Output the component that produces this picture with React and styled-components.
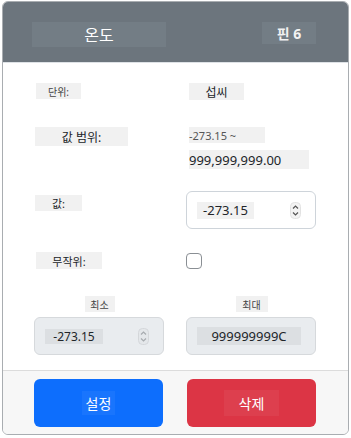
import React from "react";
import styled, { createGlobalStyle } from "styled-components";

const Global = createGlobalStyle`
  html, body { margin: 0; padding: 0; background: #fff; }
  body { width: 351px; height: 438px; overflow: hidden;
    font-family: "Noto Sans", "Noto Sans CJK KR", sans-serif; color: #212529; }
`;

const Modal = styled.div`
  box-sizing: border-box;
  margin: 1px 0 0 2px;
  width: 347px;
  height: 434px;
  border: 1px solid #a9adb1;
  border-radius: 6px;
  overflow: hidden;
  display: flex;
  flex-direction: column;
  background: #fff;
`;

const Header = styled.div`
  height: 60px;
  flex: none;
  background: #6c757d;
  border-bottom: 1px solid #dee2e6;
  display: flex;
  align-items: center;
  justify-content: space-between;
  padding: 0 32px 0 29px;
`;

const TitleBox = styled.div`
  width: 134px;
  height: 25px;
  margin-top: 4px;
  background: #737d85;
  color: #fff;
  font-size: 16px;
  display: flex;
  align-items: center;
  justify-content: center;
`;

const PinBox = styled.div`
  width: 54px;
  height: 22px;
  margin-top: 2px;
  background: #737d85;
  color: #f1f1f1;
  font-size: 14px;
  font-weight: 700;
  display: flex;
  align-items: center;
  justify-content: center;
`;

const Body = styled.div`
  flex: 1;
  padding: 20px 32px 0 31px;
  display: flex;
  flex-direction: column;
`;

const Row = styled.div`
  display: grid;
  grid-template-columns: 1fr 1fr;
  column-gap: 22px;
  align-items: start;
  margin-top: ${(p) => p.$mt || 0}px;
`;

const Label = styled.div`
  width: ${(p) => p.$w}px;
  height: ${(p) => p.$h || 17}px;
  margin-top: ${(p) => p.$top || 0}px;
  margin-left: ${(p) => p.$left || 1}px;
  background: #f1f1f1;
  font-size: ${(p) => p.$fs || 12}px;
  color: ${(p) => p.$c || "#212529"};
  display: flex;
  align-items: center;
  justify-content: ${(p) => (p.$start ? "flex-start" : "center")};
  white-space: nowrap;
`;

const Stack = styled.div`
  display: flex;
  flex-direction: column;
  gap: 7px;
`;

const CenterCell = styled.div`
  display: flex;
  justify-content: center;
`;

const InputBox = styled.div`
  box-sizing: border-box;
  height: 38px;
  border: 1px solid ${(p) => (p.$disabled ? "#d6d9dc" : "#ced4da")};
  border-radius: 6px;
  background: ${(p) => (p.$disabled ? "#e9ecef" : "#fff")};
  display: flex;
  align-items: center;
  justify-content: space-between;
  padding: 0 14px 0 10px;
`;

const InnerText = styled.div`
  width: ${(p) => p.$w}px;
  height: ${(p) => p.$h || 17}px;
  background: ${(p) => (p.$disabled ? "#dcdfe2" : "#f1f1f1")};
  font-size: ${(p) => p.$fs || 13}px;
  color: #212529;
  display: flex;
  align-items: center;
  justify-content: center;
  white-space: nowrap;
`;

const Checkbox = styled.div`
  box-sizing: border-box;
  width: 16px;
  height: 16px;
  margin-top: 1px;
  border: 1px solid #8a8f94;
  border-radius: 4px;
  background: #fff;
`;

const Footer = styled.div`
  height: 64px;
  flex: none;
  background: #f7f7f7;
  border-top: 1px solid #dcdcdc;
  display: grid;
  grid-template-columns: 1fr 1fr;
  column-gap: 24px;
  padding: 8px 32px 0 31px;
  box-sizing: border-box;
`;

const Button = styled.div`
  height: 48px;
  border-radius: 6px;
  background: ${(p) => p.$bg};
  display: flex;
  align-items: center;
  justify-content: center;
`;

const ButtonText = styled.span`
  color: #fff;
  font-size: 14px;
  padding: ${(p) => p.$pad};
  background: rgba(255, 255, 255, 0.05);
`;

const Spinner = ({ faded }) => (
  <svg width="11" height="17" viewBox="0 0 11 17">
    <rect x="0.5" y="0.5" width="10" height="16" rx="4" fill={faded ? "#e4e7ea" : "#f3f3f3"} stroke={faded ? "#d4d7da" : "#e2e2e2"} />
    <path d="M3 6.5 L5.5 4 L8 6.5" fill="none" stroke={faded ? "#a7abaf" : "#555"} strokeWidth="1.2" />
    <path d="M3 10.5 L5.5 13 L8 10.5" fill="none" stroke={faded ? "#a7abaf" : "#555"} strokeWidth="1.2" />
  </svg>
);

export default function App() {
  return (
    <>
      <Global />
      <Modal>
        <Header>
          <TitleBox>온도</TitleBox>
          <PinBox>핀 6</PinBox>
        </Header>
        <Body>
          <Row>
            <Label $w={45} $h={16} $fs={10} $c="#444" $left={2}>단위:</Label>
            <Label $w={55} $h={17} $fs={12} $left={3}>섭씨</Label>
          </Row>
          <Row $mt={27}>
            <Label $w={93} $h={19} $fs={12}>값 범위:</Label>
            <Stack>
              <Label $w={76} $h={16} $fs={11} $c="#555" $start $left={3}>-273.15 ~</Label>
              <Label $w={120} $h={19} $fs={13} $start $left={3}>999,999,999.00</Label>
            </Stack>
          </Row>
          <Row $mt={22}>
            <Label $w={47} $h={16} $fs={11} $top={4}>값:</Label>
            <InputBox>
              <InnerText $w={57}>-273.15</InnerText>
              <Spinner />
            </InputBox>
          </Row>
          <Row $mt={23}>
            <Label $w={66} $h={17} $fs={11} $left={2}>무작위:</Label>
            <Checkbox />
          </Row>
          <Row $mt={27}>
            <CenterCell>
              <Label $w={30} $h={16} $fs={10} $c="#444" $left={0}>최소</Label>
            </CenterCell>
            <CenterCell>
              <Label $w={32} $h={16} $fs={10} $c="#444" $left={0}>최대</Label>
            </CenterCell>
          </Row>
          <Row $mt={5}>
            <InputBox $disabled>
              <InnerText $disabled $w={58} $h={15} $fs={12}>-273.15</InnerText>
              <Spinner faded />
            </InputBox>
            <InputBox $disabled>
              <InnerText $disabled $w={104} $h={18} $fs={13}>999999999C</InnerText>
            </InputBox>
          </Row>
        </Body>
        <Footer>
          <Button $bg="#0d6efd">
            <ButtonText $pad="2px 4px">설정</ButtonText>
          </Button>
          <Button $bg="#dc3545">
            <ButtonText $pad="3px 15px">삭제</ButtonText>
          </Button>
        </Footer>
      </Modal>
    </>
  );
}
